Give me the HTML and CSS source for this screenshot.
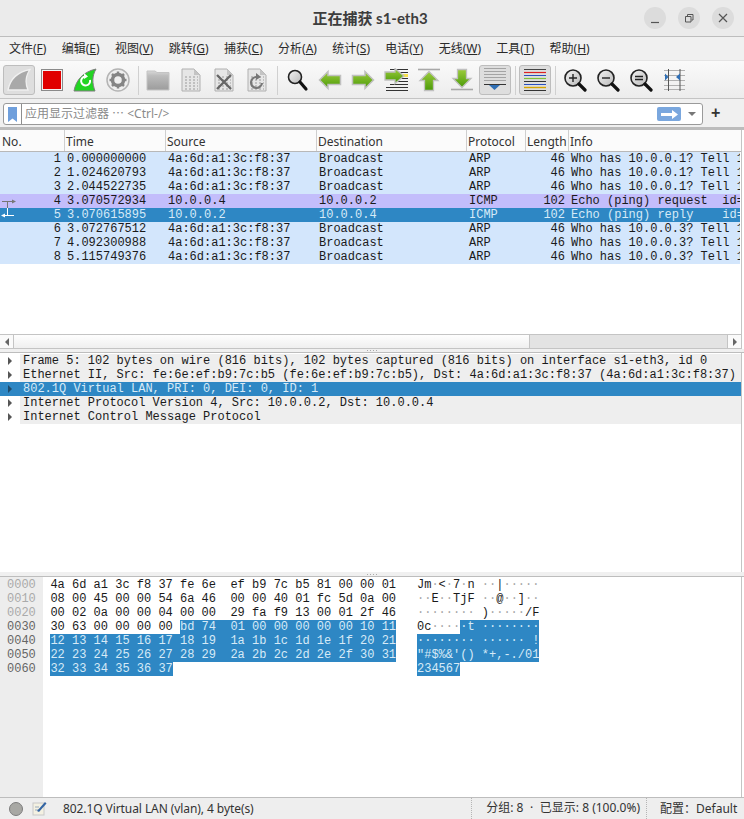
FILE: index.html
```html
<!DOCTYPE html>
<html lang="zh-CN">
<head>
<meta charset="utf-8">
<title>正在捕获 s1-eth3</title>
<link rel="stylesheet" href="styles.css">
</head>
<body>
<svg class="defs" aria-hidden="true">
  <defs>
    <linearGradient id="g-green" x1="0" y1="0" x2="0" y2="1"><stop offset="0" stop-color="#9ccc3c"/><stop offset="1" stop-color="#4a9a08"/></linearGradient>
    <linearGradient id="g-folder" x1="0" y1="0" x2="0" y2="1"><stop offset="0" stop-color="#d8d8d8"/><stop offset="0.25" stop-color="#bcbcbc"/><stop offset="1" stop-color="#9c9c9c"/></linearGradient>
    <linearGradient id="g-glass" x1="0" y1="0" x2="1" y2="1"><stop offset="0" stop-color="#f4f4f4"/><stop offset="1" stop-color="#b8b8b8"/></linearGradient>
    <symbol id="file" viewBox="0 0 24 24">
      <path d="M3 1H15L21 7V23H3Z" fill="#e6e6e6" stroke="#b0b0b0"/>
      <path d="M15 1V7H21Z" fill="#c4c4c4"/>
      <path d="M6 9h2M10 9h2M14 9h2M18 9h1M6 12h2M10 12h2M14 12h2M18 12h1M6 15h2M10 15h2M14 15h2M18 15h1M6 18h2M10 18h2M14 18h2M18 18h1M6 21h2M10 21h2M14 21h2M18 21h1" stroke="#9a9a9a" stroke-width="1.2" fill="none"/>
    </symbol>
  </defs>
</svg>

<header class="titlebar">
  <h1 class="title">正在捕获 s1-eth3</h1>
  <div class="winbtns">
    <span class="winbtn"><svg width="22" height="22" viewBox="0 0 22 22"><path d="M7 15.500h8" stroke="#555" stroke-width="1.200"/></svg></span>
    <span class="winbtn"><svg width="22" height="22" viewBox="0 0 22 22"><path d="M7.500 9.500h5.500v5.500h-5.500zM9.500 9V7.500h5.500V13h-1.500" fill="none" stroke="#555"/></svg></span>
    <span class="winbtn"><svg width="22" height="22" viewBox="0 0 22 22"><path d="M7 7l8 8M15 7l-8 8" stroke="#555" stroke-width="1.200"/></svg></span>
  </div>
</header>

<nav class="menubar">
  <span>文件(<u>F</u>)</span><span>编辑(<u>E</u>)</span><span>视图(<u>V</u>)</span><span>跳转(<u>G</u>)</span><span>捕获(<u>C</u>)</span><span>分析(<u>A</u>)</span><span>统计(<u>S</u>)</span><span>电话(<u>Y</u>)</span><span>无线(<u>W</u>)</span><span>工具(<u>T</u>)</span><span>帮助(<u>H</u>)</span>
</nav>

<div class="toolbar">
  <span class="tool on"><svg width="24" height="24" viewBox="0 0 24 24"><path d="M1 22C3 12 10 4 23 1.500C18.500 8 18 15 21 22Z" fill="#a9a9a9" stroke="#f0f0f0" stroke-width="1.300"/></svg></span>
  <span class="tool"><svg width="24" height="24" viewBox="0 0 24 24"><rect x="1.500" y="1.500" width="21" height="21" fill="#f2f2f2" stroke="#8a8a8a"/><rect x="3" y="3" width="18" height="18" fill="#e00000"/></svg></span>
  <span class="tool"><svg width="24" height="24" viewBox="0 0 24 24"><path d="M1 23C3 12 10 4 23 1C19 8 19 15 22 23Z" fill="#22d422" stroke="#7d7d7d"/><path d="M17 12a4.500 4.500 0 1 1-5-3.500" fill="none" stroke="#fff" stroke-width="2"/><path d="M11 5l4 3.500-4 2.500z" fill="#fff"/></svg></span>
  <span class="tool"><svg width="24" height="24" viewBox="0 0 24 24"><circle cx="12" cy="12" r="11" fill="#efefef" stroke="#b4b4b4" stroke-width="1.500"/><circle cx="12" cy="12" r="5.500" fill="none" stroke="#858585" stroke-width="3.500"/><path d="M12 3.500v4M12 16.500v4M3.500 12h4M16.500 12h4M6 6l2.800 2.800M15.200 15.200L18 18M18 6l-2.800 2.800M8.800 15.200L6 18" stroke="#858585" stroke-width="2.500"/></svg></span>
  <i class="sep"></i>
  <span class="tool"><svg width="24" height="24" viewBox="0 0 24 24"><path d="M1 3h8l2 1.500h12V22H1Z" fill="url(#g-folder)" stroke="#c4c4c4"/></svg></span>
  <span class="tool"><svg width="24" height="24"><use href="#file"/></svg></span>
  <span class="tool"><svg width="24" height="24" viewBox="0 0 24 24"><use href="#file" width="24" height="24"/><path d="M5 7l14 14M19 7L5 21" stroke="#666" stroke-width="2.400"/></svg></span>
  <span class="tool"><svg width="24" height="24" viewBox="0 0 24 24"><use href="#file" width="24" height="24"/><path d="M17 15a5.500 5.500 0 1 1-5-6" fill="none" stroke="#777" stroke-width="2.200"/><path d="M11 5l5 4-5 3z" fill="#777"/></svg></span>
  <i class="sep"></i>
  <span class="tool"><svg width="24" height="24" viewBox="0 0 24 24"><circle cx="10" cy="9" r="6.500" fill="url(#g-glass)" stroke="#222" stroke-width="1.600"/><path d="M15 14l6 7" stroke="#111" stroke-width="3.200" stroke-linecap="round"/></svg></span>
  <span class="tool"><svg width="24" height="24" viewBox="0 0 24 24"><path d="M1.500 12L10 3.500V7.500H22.500V16.500H10V20.500Z" fill="url(#g-green)" stroke="#c0c0c0" stroke-width="1.500"/></svg></span>
  <span class="tool"><svg width="24" height="24" viewBox="0 0 24 24"><path d="M22.500 12L14 3.500V7.500H1.500V16.500H14V20.500Z" fill="url(#g-green)" stroke="#c0c0c0" stroke-width="1.500"/></svg></span>
  <span class="tool"><svg width="24" height="24" viewBox="0 0 24 24"><path d="M6 1.500h18M14 4.500h10M14 10.500h10M12 13.500h12M6 16.500h18M2 19.500h22M2 22.500h22" stroke="#333"/><rect x="16" y="6" width="8" height="3" fill="#f6e04c"/><path d="M20 8L11 0.500V4H1V12H11V15.500Z" fill="url(#g-green)" stroke="#c0c0c0" stroke-width="1.300"/></svg></span>
  <span class="tool"><svg width="24" height="24" viewBox="0 0 24 24"><path d="M1 1.500h22" stroke="#a8a8a8" stroke-width="1.600"/><path d="M12 3.500L21 12.500H16.500V22.500H7.500V12.500H3Z" fill="url(#g-green)" stroke="#c0c0c0" stroke-width="1.300"/></svg></span>
  <span class="tool"><svg width="24" height="24" viewBox="0 0 24 24"><path d="M1 21.500h22" stroke="#a8a8a8" stroke-width="1.600"/><path d="M12 19.500L21 10.500H16.500V1.500H7.500V10.500H3Z" fill="url(#g-green)" stroke="#c0c0c0" stroke-width="1.300"/></svg></span>
  <span class="tool on"><svg width="24" height="24" viewBox="0 0 24 24"><path d="M1 .500h22M1 3.500h22M1 6.500h22M1 9.500h22M1 12.500h22" stroke="#a4a4a4"/><path d="M1 16.500h22" stroke="#333"/><path d="M6 17h11l-5.500 5z" fill="#2f6fb5"/></svg></span>
  <i class="sep"></i>
  <span class="tool on"><svg width="24" height="24" viewBox="0 0 24 24"><path d="M1 1.500h22" stroke="#444"/><path d="M1 4.500h22" stroke="#d22" stroke-width="1.200"/><path d="M1 7.500h22" stroke="#2a4fc0"/><path d="M1 10.500h22" stroke="#7fc03a" stroke-width="1.200"/><path d="M1 13.500h22" stroke="#333"/><path d="M1 16.500h22" stroke="#2a4fc0"/><path d="M1 19.500h22" stroke="#d6a400" stroke-width="1.400"/><path d="M1 22.500h22" stroke="#333"/></svg></span>
  <i class="sep"></i>
  <span class="tool"><svg width="24" height="24" viewBox="0 0 24 24"><circle cx="10" cy="10" r="8" fill="url(#g-glass)" stroke="#222" stroke-width="1.600"/><path d="M6 10h8M10 6v8" stroke="#222" stroke-width="1.400"/><path d="M16 16l6 6" stroke="#111" stroke-width="3.200" stroke-linecap="round"/></svg></span>
  <span class="tool"><svg width="24" height="24" viewBox="0 0 24 24"><circle cx="10" cy="10" r="8" fill="url(#g-glass)" stroke="#222" stroke-width="1.600"/><path d="M6 10h8" stroke="#222" stroke-width="1.400"/><path d="M16 16l6 6" stroke="#111" stroke-width="3.200" stroke-linecap="round"/></svg></span>
  <span class="tool"><svg width="24" height="24" viewBox="0 0 24 24"><circle cx="10" cy="10" r="8" fill="url(#g-glass)" stroke="#222" stroke-width="1.600"/><path d="M6 8.500h8M6 11.500h8" stroke="#222" stroke-width="1.400"/><path d="M16 16l6 6" stroke="#111" stroke-width="3.200" stroke-linecap="round"/></svg></span>
  <span class="tool"><svg width="24" height="24" viewBox="0 0 24 24"><path d="M2 2.500h21M2 7.500h21M2 12.500h21M2 17.500h21M2 21.500h21" stroke="#b0b0b0"/><path d="M6.500 1v22M18 1v22" stroke="#555"/><path d="M3 5.500l3.500 3.500-3.500 3.500zM18 5.500l-4 3.500 4 3.500z" fill="#2f6fb5"/></svg></span>
</div>

<div class="filterbar">
  <div class="filterbox">
    <span class="bookmark"><svg width="9" height="15" viewBox="0 0 9 15"><path d="M0 0H9V15L4.500 11.500L0 15Z" fill="#6f9fdc"/></svg></span>
    <span class="placeholder">应用显示过滤器 ⋯ &lt;Ctrl-/&gt;</span>
    <span class="apply"><svg width="17" height="9" viewBox="0 0 17 9"><path d="M0 3H11V0L17 4.500L11 9V6H0Z" fill="#fff"/></svg></span>
    <span class="caret"></span>
  </div>
  <span class="plus">+</span>
</div>

<div class="band"></div>

<section class="packets">
  <div class="phead"><span>No.</span><span>Time</span><span>Source</span><span>Destination</span><span>Protocol</span><span>Length</span><span>Info</span></div>
  <div class="plist">
    <div class="prow arp"><span class="r">1</span><span>0.000000000</span><span>4a:6d:a1:3c:f8:37</span><span>Broadcast</span><span>ARP</span><span class="r">46</span><span>Who has 10.0.0.1? Tell 1</span></div>
    <div class="prow arp"><span class="r">2</span><span>1.024620793</span><span>4a:6d:a1:3c:f8:37</span><span>Broadcast</span><span>ARP</span><span class="r">46</span><span>Who has 10.0.0.1? Tell 1</span></div>
    <div class="prow arp"><span class="r">3</span><span>2.044522735</span><span>4a:6d:a1:3c:f8:37</span><span>Broadcast</span><span>ARP</span><span class="r">46</span><span>Who has 10.0.0.1? Tell 1</span></div>
    <div class="prow icmp"><span class="r conv"><svg class="convline" width="16" height="14" viewBox="0 0 16 14"><path d="M2 7.500h11M7.500 7.500V14" stroke="#777"/><path d="M16 7.500l-4-2v4z" fill="#777"/></svg>4</span><span>3.070572934</span><span>10.0.0.4</span><span>10.0.0.2</span><span>ICMP</span><span class="r">102</span><span>Echo (ping) request  id=</span></div>
    <div class="prow sel"><span class="r conv"><svg class="convline" width="16" height="14" viewBox="0 0 16 14"><path d="M3 7.500h11M7.500 0V7.500" stroke="#fff"/><path d="M1 7.500l4-2v4z" fill="#fff"/></svg>5</span><span>3.070615895</span><span>10.0.0.2</span><span>10.0.0.4</span><span>ICMP</span><span class="r">102</span><span>Echo (ping) reply    id=</span></div>
    <div class="prow arp"><span class="r">6</span><span>3.072767512</span><span>4a:6d:a1:3c:f8:37</span><span>Broadcast</span><span>ARP</span><span class="r">46</span><span>Who has 10.0.0.3? Tell 1</span></div>
    <div class="prow arp"><span class="r">7</span><span>4.092300988</span><span>4a:6d:a1:3c:f8:37</span><span>Broadcast</span><span>ARP</span><span class="r">46</span><span>Who has 10.0.0.3? Tell 1</span></div>
    <div class="prow arp"><span class="r">8</span><span>5.115749376</span><span>4a:6d:a1:3c:f8:37</span><span>Broadcast</span><span>ARP</span><span class="r">46</span><span>Who has 10.0.0.3? Tell 1</span></div>
  </div>
  <div class="hscroll">
    <span class="sbtn"><i class="tri-l"></i></span>
    <span class="thumb"></span>
    <span class="trough"></span>
    <span class="sbtn end"><i class="tri-r"></i></span>
  </div>
</section>

<div class="splitter"><i></i></div>

<section class="details">
  <div class="drow"><i class="arrow"></i><span>Frame 5: 102 bytes on wire (816 bits), 102 bytes captured (816 bits) on interface s1-eth3, id 0</span></div>
  <div class="drow"><i class="arrow"></i><span>Ethernet II, Src: fe:6e:ef:b9:7c:b5 (fe:6e:ef:b9:7c:b5), Dst: 4a:6d:a1:3c:f8:37 (4a:6d:a1:3c:f8:37)</span></div>
  <div class="drow sel"><i class="arrow"></i><span>802.1Q Virtual LAN, PRI: 0, DEI: 0, ID: 1</span></div>
  <div class="drow"><i class="arrow"></i><span>Internet Protocol Version 4, Src: 10.0.0.2, Dst: 10.0.0.4</span></div>
  <div class="drow"><i class="arrow"></i><span>Internet Control Message Protocol</span></div>
</section>

<div class="splitter low"><i></i></div>

<section class="hex">
  <div class="offsets"><div class="dim">0000</div><div class="dim">0010</div><div class="dim">0020</div><div>0030</div><div>0040</div><div>0050</div><div>0060</div></div>
  <div class="bytes">
    <div>4a 6d a1 3c f8 37 fe 6e  ef b9 7c b5 81 00 00 01</div>
    <div>08 00 45 00 00 54 6a 46  00 00 40 01 fc 5d 0a 00</div>
    <div>00 02 0a 00 00 04 00 00  29 fa f9 13 00 01 2f 46</div>
    <div>30 63 00 00 00 00 <b>bd 74  01 00 00 00 00 00 10 11</b></div>
    <div><b>12 13 14 15 16 17 18 19  1a 1b 1c 1d 1e 1f 20 21</b></div>
    <div><b>22 23 24 25 26 27 28 29  2a 2b 2c 2d 2e 2f 30 31</b></div>
    <div><b>32 33 34 35 36 37</b></div>
  </div>
  <div class="ascii">
    <div>Jm<s>·</s>&lt;<s>·</s>7<s>·</s>n <s>··</s>|<s>·····</s></div>
    <div><s>··</s>E<s>··</s>TjF <s>··</s>@<s>··</s>]<s>··</s></div>
    <div><s>········</s> )<s>·····</s>/F</div>
    <div>0c<s>····</s><b>·t ········</b></div>
    <div><b>········ ······ !</b></div>
    <div><b>"#$%&amp;'() *+,-./01</b></div>
    <div><b>234567</b></div>
  </div>
</section>

<footer class="statusbar">
  <svg class="led" width="14" height="14" viewBox="0 0 14 14"><circle cx="7" cy="7" r="6.500" fill="#a8a8a4" stroke="#7c7c7c"/></svg>
  <svg class="note" width="15" height="15" viewBox="0 0 15 15"><rect x="1" y="2" width="11" height="12" fill="#f4f1e2" stroke="#c8c8c8"/><path d="M3 6h4M3 9h5" stroke="#9ab"/><path d="M5 10L13 1l1.500 1.500L7 11z" fill="#3465a4"/></svg>
  <span class="stext">802.1Q Virtual LAN (vlan), 4 byte(s)</span>
  <span class="scount">分组: 8 <span class="dot">·</span> 已显示: 8 (100.0%)</span>
  <span class="sprofile">配置：Default</span>
</footer>
</body>
</html>
```
FILE: styles.css
```css
* { box-sizing: border-box; }
html, body { margin: 0; padding: 0; }
body {
  width: 744px;
  height: 819px;
  display: flex;
  flex-direction: column;
  overflow: hidden;
  background: #fff;
  color: #2e2e2e;
  font: 12px/14px "Noto Sans", "Noto Sans CJK SC", sans-serif;
}
.defs { display: block; width: 0; height: 0; flex: none; }

.titlebar {
  flex: none;
  height: 37px;
  padding-right: 4px;
  display: flex;
  align-items: center;
  justify-content: center;
  position: relative;
  background: #ebebeb;
  border-bottom: 1px solid #bdbdbd;
}
.title {
  margin: 0;
  font: bold 15px/20px "Lato", "Noto Sans CJK SC", sans-serif;
  color: #3d3d3d;
}
.winbtns {
  position: absolute;
  top: 7px;
  right: 10px;
  display: flex;
  gap: 12px;
}
.winbtn {
  width: 22px;
  height: 22px;
  border-radius: 50%;
  background: #dcdcdc;
}
.winbtn svg { display: block; }

.menubar {
  flex: none;
  height: 23px;
  padding: 4px 0 0 9px;
  display: flex;
  gap: 15.3px;
  background: #f0f0f0;
  color: #2a2a2a;
  line-height: 16px;
}
.menubar u { text-underline-offset: 1px; }

.toolbar {
  flex: none;
  height: 39px;
  padding: 4px 0 0 3px;
  display: flex;
  align-items: flex-start;
  gap: 1px;
  background: linear-gradient(#fafafa, #ececec);
  border-top: 1px solid #e4e4e4;
  border-bottom: 1px solid #c4c4c4;
}
.tool {
  flex: none;
  width: 32px;
  height: 30px;
  display: flex;
  align-items: center;
  justify-content: center;
  border: 1px solid transparent;
  border-radius: 3px;
}
.tool.on { background: #dedede; border-color: #bdbdbd; }
.sep {
  flex: none;
  width: 6px;
  height: 29px;
  margin-top: 1px;
  background: linear-gradient(#d0d0d0, #d0d0d0) center / 1px 100% no-repeat;
}

.filterbar {
  flex: none;
  height: 28px;
  padding: 4px 0 0 3px;
  display: flex;
  gap: 8px;
  background: #f0f0f0;
}
.filterbox {
  width: 700px;
  height: 22px;
  display: flex;
  align-items: center;
  background: #fff;
  border: 1px solid #9a9a9a;
  border-radius: 3px;
}
.bookmark {
  flex: none;
  width: 18px;
  height: 20px;
  display: flex;
  align-items: center;
  justify-content: center;
  border-right: 1px solid #8e8e8e;
}
.bookmark svg { display: block; }
.placeholder { flex: 1; padding-left: 3px; color: #8a8a8a; }
.apply {
  flex: none;
  width: 24px;
  height: 14px;
  display: flex;
  align-items: center;
  justify-content: center;
  background: #7aa7de;
  border-radius: 2px;
}
.caret {
  flex: none;
  width: 0;
  height: 0;
  margin: 0 6px 0 7px;
  border: 4px solid transparent;
  border-top: 4px solid #777;
  border-bottom: 0;
}
.plus { font: bold 16px/20px "Liberation Sans", sans-serif; color: #333; }

.band { flex: none; height: 3px; background: #bcbcbc; }

.packets { flex: none; height: 219px; display: flex; flex-direction: column; border-right: 1px solid #c4c4c4; margin-right: 2px; }
.phead, .prow {
  display: grid;
  grid-template-columns: 64px 101px 151px 150px 59px 43px 1fr;
}
.phead {
  flex: none;
  height: 22px;
  background: #fbfbfb;
  border-bottom: 1px solid #b8b8b8;
  line-height: 23px;
  color: #333;
}
.phead span { padding-left: 1px; border-left: 1px solid #cfcfcf; overflow: hidden; }
.phead span:first-child { border-left: 0; padding-left: 2px; }
.plist {
  flex: 1;
  min-height: 0;
  padding-right: 1px;
  font: 12px/14px "Liberation Mono", monospace;
  background: #fff;
}
.prow { height: 14px; color: #1a1a1a; }
.prow span { padding: 0 3px; white-space: pre; overflow: hidden; }
.prow span:last-child { padding-right: 0; }
.prow .r { text-align: right; }
.prow .conv { position: relative; }
.convline { position: absolute; left: 0; top: 0; display: block; }
.arp { background: #d3e6fc; }
.icmp { background: #c3bdfb; }
.prow.sel { background: #2e87c4; color: #d6eaf7; }

.hscroll {
  flex: none;
  height: 15px;
  display: flex;
  border-top: 1px solid #c4c4c4;
  border-bottom: 1px solid #c4c4c4;
}
.sbtn {
  flex: none;
  width: 14px;
  display: flex;
  align-items: center;
  justify-content: center;
  background: #fafafa;
  border-right: 1px solid #c4c4c4;
}
.sbtn.end { border-right: 0; border-left: 1px solid #c4c4c4; }
.tri-l, .tri-r { width: 0; height: 0; border: 4px solid transparent; }
.tri-l { border-right: 4px solid #666; border-left: 0; }
.tri-r { border-left: 4px solid #666; border-right: 0; }
.thumb { flex: none; width: 516px; background: linear-gradient(#fefefe, #efefef); border-right: 1px solid #c4c4c4; }
.trough { flex: 1; background: #e3e3e3; }

.splitter {
  flex: none;
  height: 4px;
  display: flex;
  justify-content: center;
  align-items: center;
  background: #f0f0f0;
  border-bottom: 1px solid #bdbdbd;
}
.splitter i {
  width: 10px;
  height: 1px;
  background: repeating-linear-gradient(90deg, #aaa 0 1px, transparent 1px 3px);
}

.details {
  flex: none;
  height: 219px;
  padding-top: 1px;
  font: 12px/14px "Liberation Mono", monospace;
  color: #1a1a1a;
  background: #fff;
  border-right: 1px solid #c4c4c4;
  margin-right: 2px;
}
.drow {
  height: 14px;
  display: flex;
  white-space: pre;
  overflow: hidden;
}
.drow .arrow {
  flex: none;
  width: 0;
  height: 0;
  margin: 3px 8px 0 8px;
  border: 4px solid transparent;
  border-left: 4px solid #555;
  border-right: 0;
  box-sizing: content-box;
}
.drow span { flex: 1; padding-left: 3px; background: #eeeeee; }
.drow.sel { background: #2e87c4; color: #d6eaf7; }
.drow.sel span { background: transparent; }
.drow.sel .arrow { border-left-color: #1e4a6a; }

.splitter.low { height: 5px; }

.hex {
  flex: 1;
  min-height: 0;
  display: flex;
  font: 12px/14px "Liberation Mono", monospace;
  color: #1a1a1a;
  border-right: 1px solid #c4c4c4;
  margin-right: 2px;
}
.offsets { flex: none; width: 43px; padding: 1px 0 0 7px; background: #ededed; color: #666; }
.offsets .dim { color: #aaa; }
.bytes { flex: none; width: 374px; padding: 1px 0 0 7.4px; }
.ascii { flex: 1; padding-top: 1px; }
.bytes > div, .ascii > div { height: 14px; white-space: pre; }
.hex b { display: inline-block; height: 14px; font-weight: normal; background: #2e87c4; color: #d6eaf7; }
.hex s { text-decoration: none; color: #a8a8a8; }

.statusbar {
  flex: none;
  height: 22px;
  display: flex;
  align-items: center;
  background: #eeeeee;
  border-top: 1px solid #bdbdbd;
  color: #333;
}
.led { flex: none; margin-left: 9px; }
.note { flex: none; margin-left: 9px; }
.stext { flex: 1; margin-left: 16px; letter-spacing: -0.08px; }
.scount {
  flex: none;
  height: 21px;
  padding: 3px 6px 0 14px;
  border-left: 1px dotted #b5b5b5;
  border-right: 1px dotted #b5b5b5;
}
.dot { margin: 0 3.5px; }
.sprofile { flex: none; width: 97px; padding-left: 13px; }
```
